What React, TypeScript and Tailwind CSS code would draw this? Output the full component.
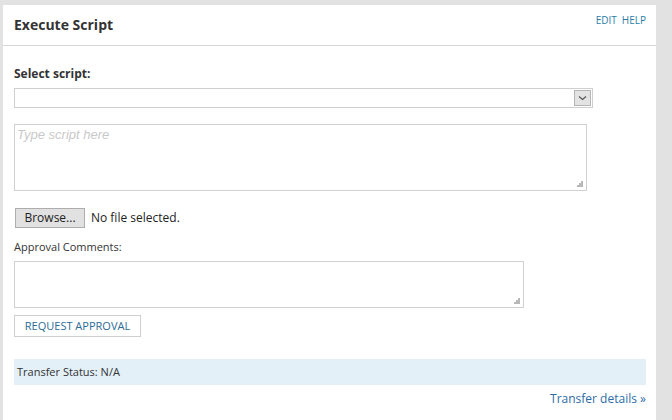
import React from "react";

export default function App() {
  return (
    <div className="w-[672px] h-[420px] bg-[#e2e2e2] pt-[5px] pl-[3px] overflow-hidden" style={{ fontFamily: '"Open Sans", sans-serif' }}>
      <div className="w-[653px] h-[415px] bg-white">
        {/* header */}
        <div className="h-[41px] border-b border-[#d6d6d6] flex justify-between pl-[11px] pr-[10px]">
          <h1 className="text-[14px] font-bold text-[#333] mt-[11px] leading-[18px]">Execute Script</h1>
          <div className="flex gap-[5px] text-[10px] text-[#2a7ea8] mt-[9px] leading-[12px]">
            <span>EDIT</span>
            <span>HELP</span>
          </div>
        </div>

        <div className="pl-[11px] pr-[10px]">
          <p className="text-[12px] font-bold text-[#333] mt-[20px] leading-[16px]">Select script:</p>
          <div className="mt-[6px] w-[579px] h-[20px] border border-[#cfcfcf] flex justify-end p-[1px]">
            <div className="w-[17px] h-[16px] bg-[#e3e3e3] border border-[#b5b5b5] flex items-center justify-center">
              <svg width="9" height="6" viewBox="0 0 9 6">
                <path d="M1 1.5 L4.5 4.5 L8 1.5" fill="none" stroke="#555" strokeWidth="1.2" />
              </svg>
            </div>
          </div>

          <div className="relative mt-[16px] w-[573px] h-[67px] border border-[#d0d0d0]">
            <span className="absolute left-[2px] top-[0px] text-[13px] italic text-[#c9c9c9]" style={{ fontFamily: '"Liberation Sans", sans-serif' }}>
              Type script here
            </span>
            <Grip />
          </div>

          <div className="mt-[17px] flex items-center gap-[6px]">
            <div className="ml-[1px] w-[70px] h-[20px] bg-[#e1e1e1] border border-[#adadad] text-[12px] text-[#222] flex items-center justify-center leading-none">
              Browse...
            </div>
            <span className="text-[12px] text-[#222]">No file selected.</span>
          </div>

          <p className="mt-[12px] text-[11px] text-[#333] leading-[14px]">Approval Comments:</p>
          <div className="relative mt-[7px] w-[510px] h-[47px] border border-[#d0d0d0]">
            <Grip />
          </div>

          <div className="mt-[7px] w-[127px] h-[22px] border border-[#cfcfcf] flex items-center justify-center text-[11px] text-[#2b6b95]">
            REQUEST APPROVAL
          </div>

          <div className="mt-[22px] w-[632px] h-[26px] bg-[#e3f0f8] flex items-center pl-[3px] text-[11px] text-[#333]">
            Transfer Status: N/A
          </div>

          <div className="w-[632px] flex justify-end mt-[5px]">
            <span className="text-[12px] text-[#2d6ca4]">Transfer details »</span>
          </div>
        </div>
      </div>
    </div>
  );
}

function Grip() {
  return (
    <svg className="absolute right-[3px] bottom-[3px]" width="7" height="7" viewBox="0 0 7 7">
      <rect x="5" y="1" width="2" height="2" fill="#b8b8b8" />
      <rect x="3" y="3" width="2" height="2" fill="#b8b8b8" />
      <rect x="5" y="3" width="2" height="2" fill="#b8b8b8" />
      <rect x="1" y="5" width="2" height="2" fill="#b8b8b8" />
      <rect x="3" y="5" width="2" height="2" fill="#b8b8b8" />
      <rect x="5" y="5" width="2" height="2" fill="#b8b8b8" />
    </svg>
  );
}
